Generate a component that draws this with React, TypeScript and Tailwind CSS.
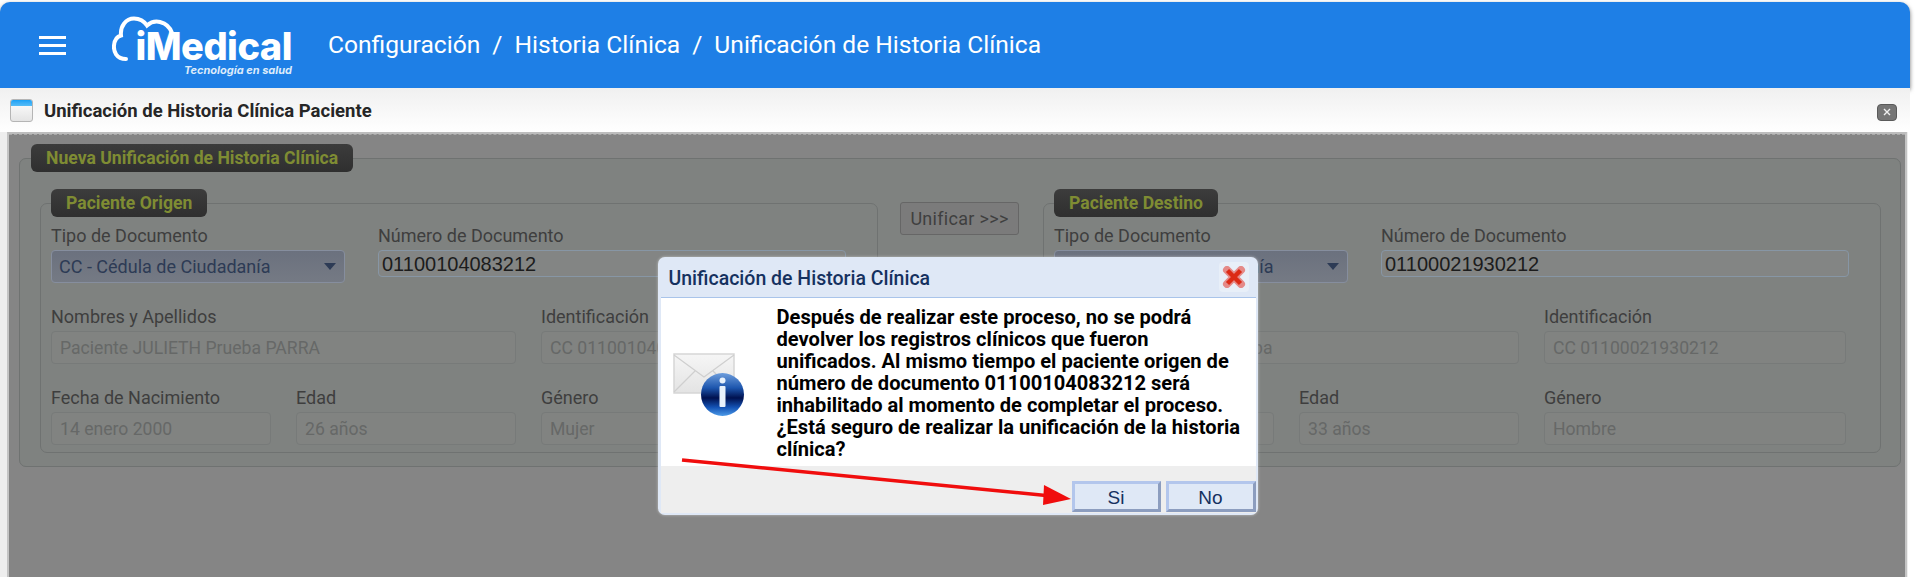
const LEGEND = "flex h-[28px] items-center rounded-[6px] bg-gradient-to-b from-[#3c3c3c] to-[#2f2f2f] px-[15px] text-[17.6px] font-bold text-[#7f8c33]";
const LABEL = "flex h-[25px] items-center pb-[4px] text-[18px] text-[#3e3e3e]";
const FIELD = "flex h-[33px] items-center rounded-[4px] border border-[#777a79] bg-[#818381] pl-[8px] pt-[2px] text-[17.6px] text-[#666867]";

function Field({ label, value, className }: { label: string; value: string; className: string }) {
  return (
    <div className={className}>
      <div className={LABEL}>{label}</div>
      <div className={FIELD}>{value}</div>
    </div>
  );
}

function Paciente({ title, doc, name, id, birth, age, gender }: { title: string; doc: string; name: string; id: string; birth: string; age: string; gender: string }) {
  return (
    <fieldset className="w-[838px] rounded-[7px] border border-[#6f7271] px-[10px] pb-[7px]">
      <legend className={LEGEND}>{title}</legend>
      <div className="mt-[8px] flex gap-[33px]">
        <div className="w-[294px]">
          <div className={LABEL}>Tipo de Documento</div>
          <div className="flex h-[33px] items-center justify-between rounded-[4px] border border-[#868e9e] bg-gradient-to-b from-[#6b717e] to-[#757a84] pl-[7px] pr-[8px] text-[18px] text-[#2d3b55]">
            CC - Cédula de Ciudadanía
            <span className="h-0 w-0 border-x-[6px] border-t-[7px] border-x-transparent border-t-[#2d3b55]" />
          </div>
        </div>
        <div className="w-[468px]">
          <div className={LABEL}>Número de Documento</div>
          <div className="flex h-[27px] items-center rounded-[4px] border border-[#8796a5] bg-[#838584] pl-[3px] font-['Liberation_Sans',sans-serif] text-[20px] text-[#1c1c1c]">{doc}</div>
        </div>
      </div>
      <div className="mt-[23px] flex gap-[25px]">
        <Field label="Nombres y Apellidos" value={name} className="w-[465px]" />
        <Field label="Identificación" value={id} className="w-[302px]" />
      </div>
      <div className="mt-[23px] flex gap-[25px]">
        <Field label="Fecha de Nacimiento" value={birth} className="w-[220px]" />
        <Field label="Edad" value={age} className="w-[220px]" />
        <Field label="Género" value={gender} className="w-[302px]" />
      </div>
    </fieldset>
  );
}

function MailInfoIcon() {
  return (
    <svg width="72" height="64" viewBox="0 0 72 64" className="mt-[5px] ml-[12px]">
      <defs>
        <linearGradient id="env" x1="0" y1="0" x2="0" y2="1">
          <stop offset="0" stopColor="#f6f6f6" />
          <stop offset="1" stopColor="#e3e3e3" />
        </linearGradient>
        <linearGradient id="ball" x1="0" y1="0" x2="0" y2="1">
          <stop offset="0" stopColor="#6d9ddc" />
          <stop offset="0.35" stopColor="#1c55ad" />
          <stop offset="0.58" stopColor="#00114f" />
          <stop offset="0.8" stopColor="#1453b5" />
          <stop offset="1" stopColor="#4d9be8" />
        </linearGradient>
      </defs>
      <rect x="1" y="1" width="60" height="39" fill="url(#env)" stroke="#d6d6d6" strokeWidth="1.5" />
      <path d="M1 2 L31 24 L61 2 M1 39 L22 18 M61 39 L40 18" fill="none" stroke="#cfcfcf" strokeWidth="1.2" />
      <circle cx="49.5" cy="41.5" r="21.5" fill="url(#ball)" />
      <circle cx="49.5" cy="27.5" r="3" fill="#e8f1fb" />
      <rect x="46.5" y="33" width="6" height="21" rx="1" fill="#e8f1fb" />
    </svg>
  );
}

function DialogButton({ label, width }: { label: string; width: string }) {
  return (
    <button className={`h-[31px] ${width} border-[3px] border-b-[#8c9dbf] border-l-[#b3c6ec] border-r-[#8c9dbf] border-t-[#b3c6ec] bg-[#dfe8f6] font-['Liberation_Sans',sans-serif] text-[19px] text-[#15315f]`}>{label}</button>
  );
}

function Dialog() {
  return (
    <div className="absolute left-[658px] top-[255px] flex h-[258px] w-[600px] flex-col rounded-[7px] bg-[#dfe8f6] px-[2.5px] pb-[2px] shadow-[0_0_3px_rgba(255,255,255,0.5)]">
      <div className="flex h-[41px] shrink-0 items-center justify-between border-b border-[#a9c4ea] pl-[8px] pr-[7px]">
        <span className="pt-[4px] text-[19.5px] font-medium text-[#15315f]">Unificación de Historia Clínica</span>
        <span className="flex h-[30px] w-[30px] items-center justify-center rounded-[4px] bg-[#e8eff8]">
          <svg width="24" height="22" viewBox="0 0 24 22">
            <path d="M5 4 L19 18 M19 4 L5 18" stroke="#e58a88" strokeWidth="8" strokeLinecap="round" />
            <path d="M5.5 4.5 L18.5 17.5 M18.5 4.5 L5.5 17.5" stroke="#dc2b16" strokeWidth="4.5" />
          </svg>
        </span>
      </div>
      <div className="flex min-h-0 flex-1 bg-white">
        <div className="flex w-[116px] shrink-0 items-center">
          <MailInfoIcon />
        </div>
        <p className="w-[472px] pt-[8px] text-[20.1px] font-bold leading-[22px] text-black">
          Después de realizar este proceso, no se podrá devolver los registros clínicos que fueron unificados. Al mismo tiempo el paciente origen de número de documento 01100104083212 será inhabilitado al momento de completar el proceso. ¿Está seguro de realizar la unificación de la historia clínica?
        </p>
      </div>
      <div className="flex h-[47px] shrink-0 items-end justify-end gap-[5px] bg-[#eeeeee] pb-[1px]">
        <DialogButton label="Si" width="w-[89px]" />
        <DialogButton label="No" width="w-[90px]" />
      </div>
    </div>
  );
}

function Arrow() {
  return (
    <svg className="absolute left-[675px] top-[450px]" width="400" height="56" viewBox="0 0 400 56">
      <path d="M7 8 L376 44" stroke="#f00d0d" strokeWidth="3.5" fill="none" />
      <path d="M396 47 L369 33 L368 53 Z" fill="#f00d0d" />
    </svg>
  );
}

function Logo() {
  return (
    <div className="relative ml-[46px] flex h-[59px] w-[180px] flex-col items-end font-['Inter',sans-serif] text-white">
      <svg className="absolute left-0 top-0" width="64" height="46" viewBox="0 0 64 46" fill="none">
        <path d="M14 43 C4 43 1.5 35 2 29.5 C2.5 24 5 20.5 9 19.5 C8 10 14 2.5 22 2.5 C28 2.5 32 5 35 9.5 C39 6 44 5 48 6 C54 7.5 58 11 60 17" stroke="white" strokeWidth="4" strokeLinecap="round" />
      </svg>
      <span className="mt-[10px] text-[38px] font-extrabold leading-[40px] tracking-[-0.5px]">iMedical</span>
      <span className="-mt-[2px] text-[11px] font-bold italic leading-[12px] text-[#dcebfb]">Tecnología en salud</span>
    </div>
  );
}

export default function App() {
  return (
    <div className="h-[577px] w-[1915px] overflow-hidden bg-white font-['Roboto',sans-serif]">
      <div className="relative h-full">
        <header className="mt-[2px] flex h-[86px] w-[1910px] items-center rounded-t-[10px] bg-[#1e7fe6] shadow-[0_2px_4px_rgba(0,0,0,0.55)]">
          <div className="ml-[39px] flex w-[27px] flex-col gap-[5px]">
            <span className="h-[3px] bg-white" />
            <span className="h-[3px] bg-white" />
            <span className="h-[3px] bg-white" />
          </div>
          <Logo />
          <nav className="ml-[36px] flex items-center gap-[12px] text-[24.6px] text-white">
            <span>Configuración</span>
            <span>/</span>
            <span>Historia Clínica</span>
            <span>/</span>
            <span>Unificación de Historia Clínica</span>
          </nav>
        </header>
        <div className="flex h-[44px] w-[1910px] items-center justify-between bg-gradient-to-b from-[#f0f0f0] to-white pl-[10px] pr-[13px]">
          <div className="flex items-center gap-[11px]">
            <div className="h-[23px] w-[23px] overflow-hidden rounded-[3px] border border-[#b5b5b5] bg-gradient-to-b from-white to-[#e4e4e4]">
              <div className="h-[6px] bg-gradient-to-b from-[#17a0f5] to-[#55bdf7]" />
            </div>
            <span className="pt-[4px] text-[18.5px] font-bold text-[#262626]">Unificación de Historia Clínica Paciente</span>
          </div>
          <div className="mt-[4px] flex h-[17px] w-[20px] items-center justify-center rounded-[4px] border border-[#5a5a5a] bg-[#767676]">
            <svg width="10" height="10" viewBox="0 0 10 10">
              <path d="M2 2 L8 8 M8 2 L2 8" stroke="#f0f0f0" strokeWidth="1.4" />
            </svg>
          </div>
        </div>
        <div className="h-full w-[1908px] bg-[#eeeeee]">
          <main className="ml-[7px] h-full w-[1900px] border-x-[2px] border-t-[2px] border-x-[#c4c4c4] border-t-[#bdbdbd]">
            <div className="h-full border-t border-dashed border-[#a9a9a9] bg-[#858585] px-[10px] pt-[9px]">
              <fieldset className="w-[1882px] rounded-[7px] border border-[#6f7271] bg-[#7f8280] pb-[13px]">
                <legend className={LEGEND + " ml-[11px]"}>Nueva Unificación de Historia Clínica</legend>
                <div className="mt-[17px] flex items-start pl-[20px]">
                  <Paciente
                    title="Paciente Origen"
                    doc="01100104083212"
                    name="Paciente JULIETH Prueba PARRA"
                    id="CC 01100104083212"
                    birth="14 enero 2000"
                    age="26 años"
                    gender="Mujer"
                  />
                  <button className="ml-[22px] mr-[24px] mt-[13px] h-[33px] w-[119px] shrink-0 rounded-[3px] border border-[#666] bg-[#7b7b7b] text-[18px] tracking-[0.3px] text-[#3f3f3f]">Unificar &gt;&gt;&gt;</button>
                  <Paciente
                    title="Paciente Destino"
                    doc="01100021930212"
                    name="Paciente CRISTIAN Prueba"
                    id="CC 01100021930212"
                    birth=""
                    age="33 años"
                    gender="Hombre"
                  />
                </div>
              </fieldset>
            </div>
          </main>
        </div>
        <Dialog />
        <Arrow />
      </div>
    </div>
  );
}
